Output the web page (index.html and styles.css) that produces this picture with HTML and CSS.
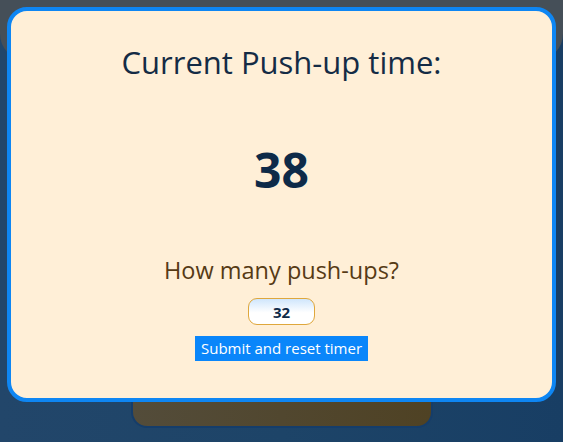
FILE: index.html
```html
<!DOCTYPE html>
<html>
<head>
<meta charset="utf-8">
<link rel="stylesheet" href="styles.css">
</head>
<body>
<div class="page">
  <header class="topbar"></header>
  <div class="spacer"></div>
  <div class="card"></div>
</div>
<div class="overlay">
  <div class="modal">
    <h1 class="title">Current Push-up time:</h1>
    <div class="time">38</div>
    <h2 class="question">How many push-ups?</h2>
    <input class="count" type="text" value="32">
    <button class="submit">Submit and reset timer</button>
  </div>
</div>
</body>
</html>
```
FILE: styles.css
```css
html, body {
  margin: 0;
  padding: 0;
  height: 100%;
}
body {
  font-family: "Open Sans", "Noto Sans", sans-serif;
  background: linear-gradient(90deg, #22466a 0%, #1d4468 50%, #183e64 100%);
  overflow: hidden;
}
.page {
  display: flex;
  flex-direction: column;
  align-items: center;
  height: 100%;
}
.topbar {
  width: 100%;
  height: 60px;
  background: #454f58;
  border-radius: 0 0 26px 26px;
}
.spacer {
  height: 334px;
}
.card {
  width: 298px;
  height: 32px;
  background: linear-gradient(90deg, #534c3a, #4f4224);
  border: 2px solid #153d6a;
  border-top: none;
  border-radius: 0 0 16px 16px;
}
.overlay {
  position: absolute;
  left: 7px;
  top: 7px;
}
.modal {
  box-sizing: border-box;
  width: 549px;
  height: 395px;
  background: #ffefd7;
  border: 4px solid #0e86f3;
  border-radius: 20px;
  display: flex;
  flex-direction: column;
  align-items: center;
  padding-top: 31px;
}
.title {
  margin: 0;
  font-weight: 400;
  font-size: 31px;
  line-height: 40px;
  color: #142b45;
}
.time {
  margin-top: 58px;
  font-weight: 700;
  font-size: 48px;
  line-height: 60px;
  color: #0e2a48;
}
.question {
  margin: 55px 0 0;
  font-weight: 400;
  font-size: 23.5px;
  line-height: 30px;
  color: #563a15;
}
.count {
  box-sizing: border-box;
  margin-top: 13px;
  width: 67px;
  height: 27px;
  border: 1px solid #dfa73c;
  border-radius: 9px;
  background: linear-gradient(180deg, #cfe6fc 0%, #ffffff 55%);
  text-align: center;
  font-family: inherit;
  font-weight: 700;
  font-size: 15px;
  color: #0e2a48;
  padding: 0;
  outline: none;
}
.submit {
  margin-top: 11px;
  height: 25px;
  padding: 0 6px;
  border: none;
  background: #0a86fa;
  color: #ffffff;
  font-family: inherit;
  font-size: 15px;
  line-height: 25px;
}
```
